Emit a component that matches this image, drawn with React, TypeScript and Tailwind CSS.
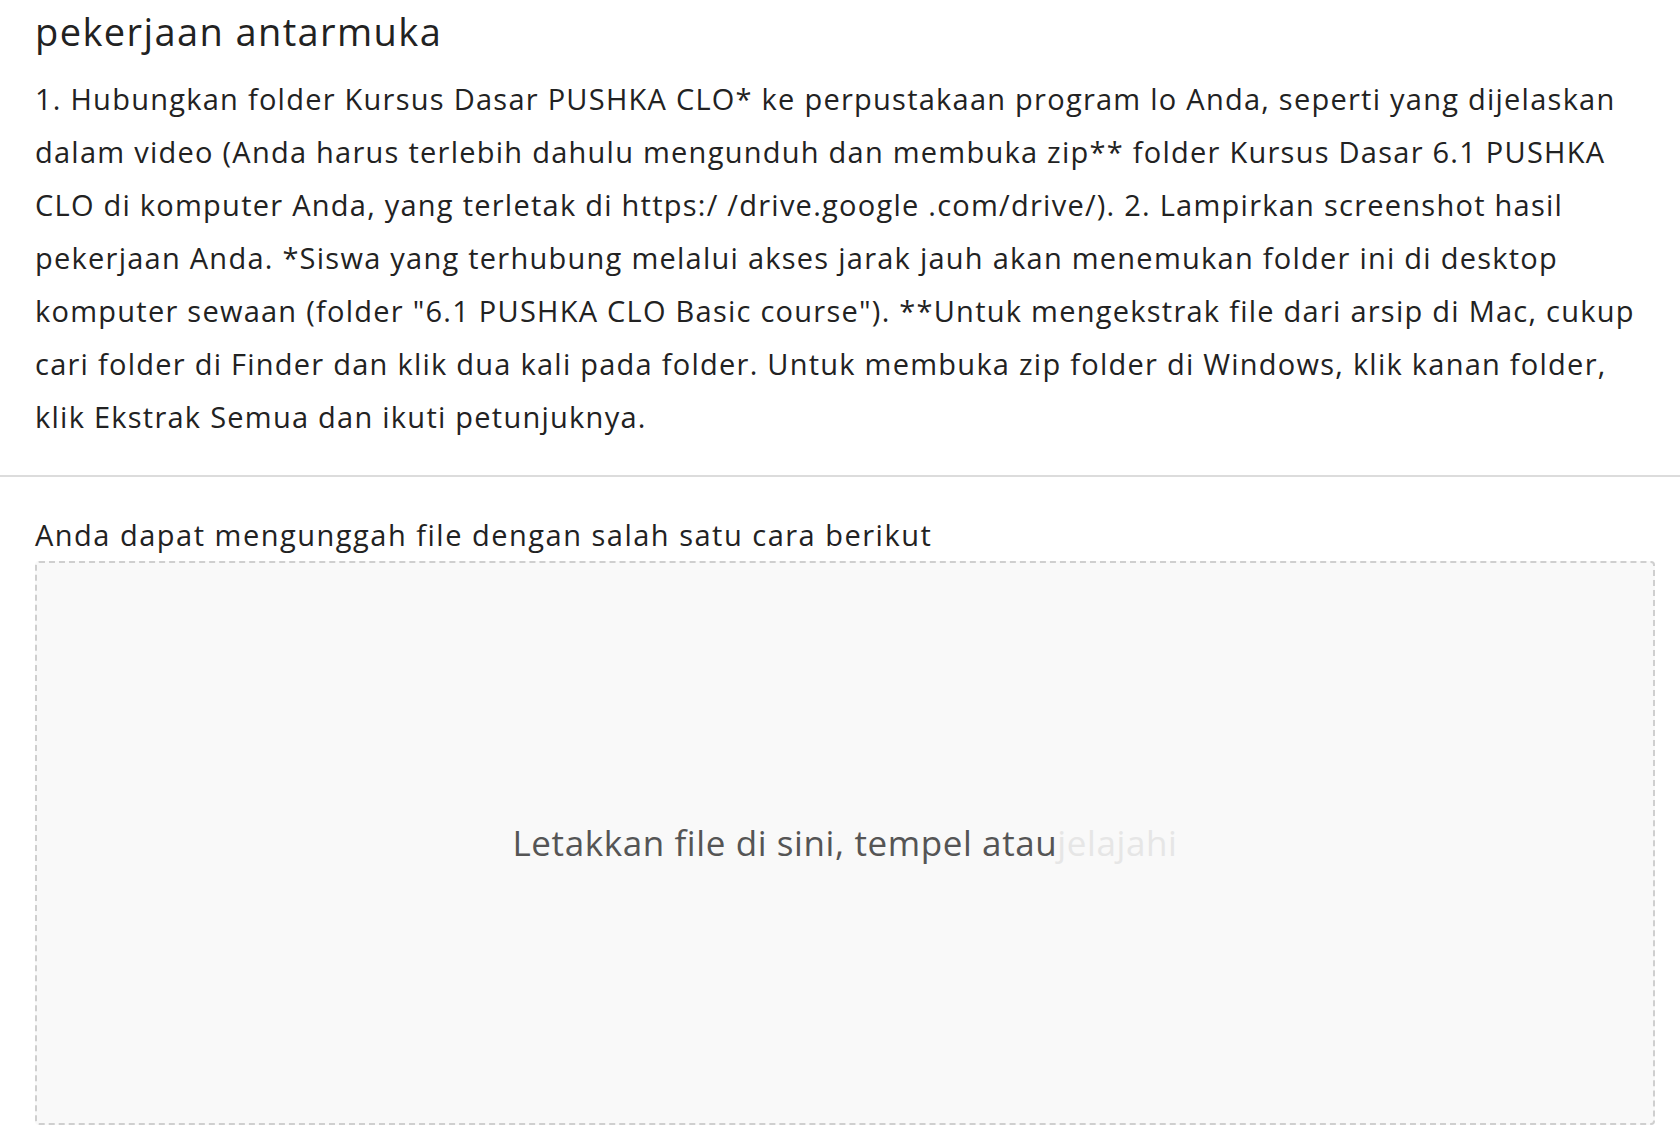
import React from 'react';

const paragraph =
  '1. Hubungkan folder Kursus Dasar PUSHKA CLO* ke perpustakaan program lo Anda, seperti yang dijelaskan dalam video (Anda harus terlebih dahulu mengunduh dan membuka zip** folder Kursus Dasar 6.1 PUSHKA CLO di komputer Anda, yang terletak di https:/ /drive.google .com/drive/). 2. Lampirkan screenshot hasil pekerjaan Anda. *Siswa yang terhubung melalui akses jarak jauh akan menemukan folder ini di desktop komputer sewaan (folder "6.1 PUSHKA CLO Basic course"). **Untuk mengekstrak file dari arsip di Mac, cukup cari folder di Finder dan klik dua kali pada folder. Untuk membuka zip folder di Windows, klik kanan folder, klik Ekstrak Semua dan ikuti petunjuknya.';

export default function App() {
  return (
    <div className="min-h-screen bg-white text-[#222] font-['Open_Sans',sans-serif]">
      {/* Task description */}
      <section className="pl-[35px] pr-[25px]">
        <h2 className="text-[38px] leading-[50px] pt-[6px] font-normal tracking-[1.4px]">pekerjaan antarmuka</h2>
        <p className="text-[29px] leading-[53px] pt-[16px] pb-[32px] pr-[10px] tracking-[1.25px]">{paragraph}</p>
      </section>

      <div className="h-[2px] bg-[#dcdcdc]" />

      {/* Upload */}
      <section className="pl-[35px] pr-[25px] pt-[33px]">
        <p className="text-[29px] leading-[50px] tracking-[1.5px]">Anda dapat mengunggah file dengan salah satu cara berikut</p>
        <div className="h-[564px] mt-[1px] rounded-[4px] border-2 border-dashed border-[#cfcfcf] bg-[#f9f9f9] flex items-center justify-center">
          <span className="text-[35px] text-[#555] tracking-[0.6px]">
            Letakkan file di sini, tempel atau
            <span className="text-[#e6e6e6] cursor-pointer">jelajahi</span>
          </span>
        </div>
      </section>
    </div>
  );
}
